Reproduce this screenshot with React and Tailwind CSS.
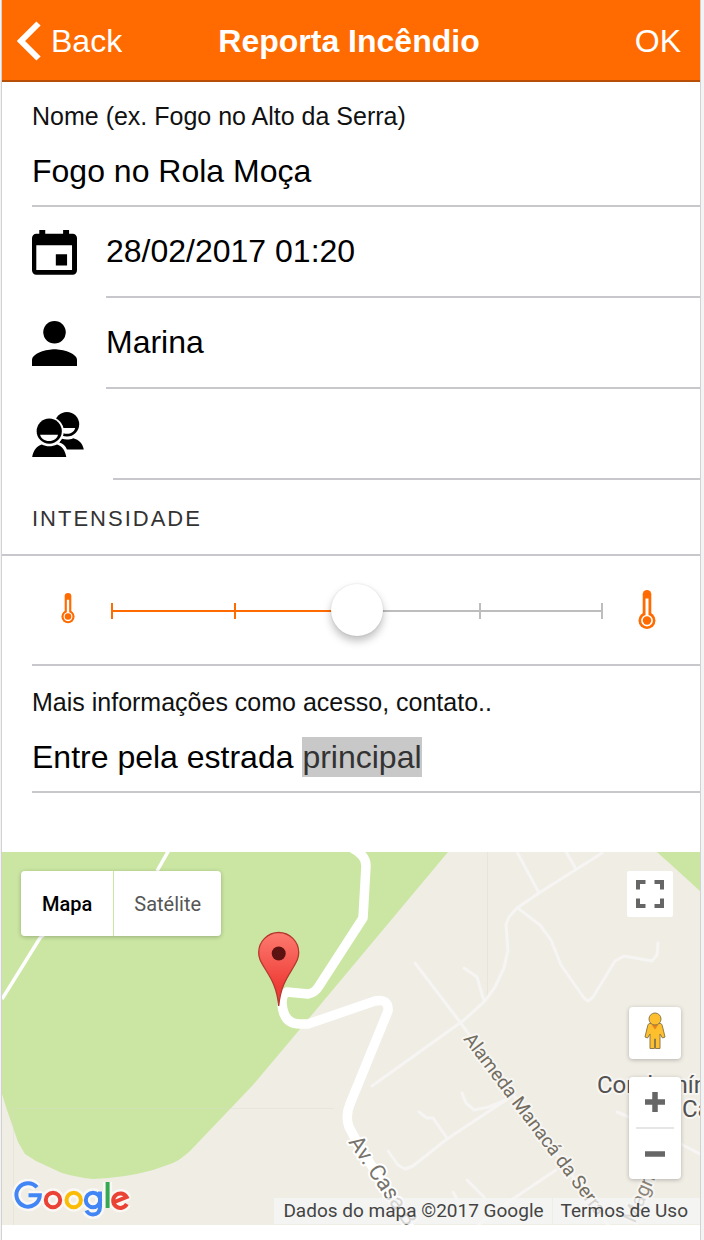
import { useEffect, useRef, useState } from "react";

function BackIcon() {
  return (
    <svg className="h-10 w-6 shrink-0" viewBox="0 0 24 40" fill="none" stroke="currentColor" strokeWidth="6" aria-hidden="true">
      <path d="M21.500 2.500 4 20l17.500 17.500" />
    </svg>
  );
}

function CalendarIcon() {
  return (
    <svg className="h-[45px] w-[45px] shrink-0" viewBox="0 0 136 136" aria-hidden="true">
      <path
        fillRule="evenodd"
        d="M22 0h18v11h54V0h18v11h11a13 13 0 0 1 13 13v98a13 13 0 0 1-13 13H13a13 13 0 0 1-13-13V24a13 13 0 0 1 13-13h9zM13 46v75h108V46zM72 73h34v34H72z"
      />
    </svg>
  );
}

function PersonIcon() {
  return (
    <svg className="h-[45px] w-[45px] shrink-0" viewBox="0 0 136 136" aria-hidden="true">
      <circle cx="68" cy="34" r="34" />
      <path d="M0 136v-18c0-22 45-33 68-33s68 11 68 33v18z" />
    </svg>
  );
}

function PeopleIcon() {
  return (
    <svg className="h-[45px] w-[52px] shrink-0" viewBox="0 0 156 136" aria-hidden="true">
      <circle cx="105" cy="37" r="37" />
      <path d="M86 48h44c-3 11-13 18-25 18-8 0-14-3-19-8z" fill="#fff" />
      <path d="M82 92l8-11c12 4 24 3 34-2 18 4 29 17 32 34h-51c-4-10-12-18-23-21z" />
      <circle cx="51.500" cy="58" r="44" fill="#fff" />
      <circle cx="51.500" cy="58" r="38" />
      <path d="M24 69h54c-2 11-13 19-27 19s-25-8-27-19z" fill="#fff" />
      <path d="M0 136c3-19 13-33 29-38 14 7 31 7 46 0 16 5 25 19 28 38z" />
    </svg>
  );
}

function ThermometerIcon({ large }) {
  return (
    <svg
      className={large ? "h-10 w-[26px] shrink-0" : "ml-6 h-[34px] w-6 shrink-0"}
      viewBox={large ? "-4.500 0 26 40" : "-7 0 31 44"}
      aria-hidden="true"
    >
      <circle cx="8.500" cy="30.500" r="8.500" fill="#ff6b00" />
      <rect x="4.200" y="0" width="8.600" height="28" rx="4.300" fill="#ff6b00" />
      <path d="M7 8.600h3V25a5.800 5.800 0 1 1-3 0z" fill="#fff" />
      <circle cx="8.500" cy="30.500" r="4.200" fill="#ff6b00" />
    </svg>
  );
}

function LogoShapes({ halo }) {
  const c = (color) => (halo ? "#ffffff" : color);
  const w = halo ? 9 : 4;
  return (
    <g fill="none" strokeWidth={w} opacity={halo ? 0.65 : 1} strokeLinejoin={halo ? "round" : "miter"}>
      <path d="M23 7.300A11.700 11.700 0 1 0 25.800 15.300H14.500" stroke={c("#4285f4")} />
      <circle cx="39" cy="20" r="7.200" stroke={c("#ea4335")} />
      <circle cx="59.700" cy="20" r="7.200" stroke={c("#fbbc05")} />
      <circle cx="79" cy="20" r="7.200" stroke={c("#4285f4")} />
      <path d="M86 11.500V27c0 5-3 7.500-7 7.500-3.500 0-5.500-1.700-6.600-4" stroke={c("#4285f4")} />
      <path d="M93.600 2v26" stroke={c("#34a853")} />
      <path d="M112.800 24A7.200 7.200 0 1 1 112.600 17L100.500 22" stroke={c("#ea4335")} />
    </g>
  );
}

function GoogleLogo() {
  return (
    <svg className="h-10 w-[122px]" viewBox="-3 -1 122 40" role="img" aria-label="Google">
      <LogoShapes halo />
      <LogoShapes />
    </svg>
  );
}

const minorRoads = [
  "M516 850 539 893",
  "M565 850 576 869",
  "M602 853 539 893 517 908 509 917 506 925 508 950 504 968 495 987 485 1001 464 1020 372 1086",
  "M519 909 540 925 551 940 561 965 584 998 588 1001 593 997 615 961 624 956 652 961 657 955 658 943",
  "M464 968 477 977 484 1001",
  "M415 963 460 1022 590 1200 612 1230",
  "M419 1112 427 1118 433 1118 447 1138",
  "M388 1151 398 1165 405 1169 413 1166 447 1139 506 1100",
  "M462 1093 466 1103 474 1110 489 1107 506 1100",
  "M556 1170 501 1207 478 1225",
  "M467 1180 484 1197",
  "M453 1192 462 1208",
  "M617 1112 629 1117 700 1154",
];

function MapDrawing() {
  return (
    <svg className="block h-full w-full" viewBox="2 852 698 373" preserveAspectRatio="xMidYMid slice" role="img" aria-label="Mapa da ocorrência">
      <defs>
        <linearGradient id="pin" x1="0" y1="0" x2="0" y2="1">
          <stop offset="0" stopColor="#fd7a6f" />
          <stop offset="0.750" stopColor="#ee3c36" />
        </linearGradient>
      </defs>
      <rect x="2" y="852" width="698" height="373" fill="#f0ede5" />
      <path
        d="M2 852H448L290 1041 252 1086 190 1151Q180 1160 173 1163L153 1170Q124 1178 93 1179 76 1177 62 1173L36 1161 25 1154 18 1142 7 1110 2 1094z"
        fill="#cae6a2"
      />
      <path d="M657 852H700V891L677 870z" fill="#cae6a2" />
      <path d="M12 1108.500H334M487.500 852V1000M13.500 1108V1225" stroke="#dcdcd0" strokeWidth="1" opacity="0.400" />
      <g fill="none" stroke="#f6f5f3" strokeWidth="3" strokeLinecap="round" strokeLinejoin="round">
        {minorRoads.map((d) => (
          <path key={d} d={d} />
        ))}
      </g>
      <g fill="none" stroke="#ffffff" strokeLinejoin="round">
        <path d="M169 850 157 871M47 932 40 938 2 999" strokeWidth="3.500" />
        <path
          d="M352 848Q366 855 366 866L363 918 319 986Q315 993 308 994L287 992Q282 994 282 1003 283 1024 300 1024H308L375 1001Q389 998 388 1011L350 1104Q345 1116 349 1127L358 1144 410 1227"
          strokeWidth="9.500"
        />
      </g>
      <g fontFamily="Roboto, sans-serif" paintOrder="stroke" strokeLinejoin="round">
        <text transform="translate(348 1142) rotate(56)" fontSize="22" fill="#77746d" stroke="#ffffff" strokeWidth="4">
          Av. Casa B
        </text>
        <text transform="translate(463 1039) rotate(53)" fontSize="19" fill="#736d5f" stroke="#f7f6f3" strokeWidth="4">
          Alameda Manacá da Serra
        </text>
        <text transform="translate(635 1224) rotate(-66)" fontSize="20" fill="#8b8578" stroke="#f7f6f3" strokeWidth="4">
          Magn
        </text>
        <g fontSize="24" fill="#545250" stroke="#f7f6f3" strokeWidth="4">
          <text x="597" y="1093">Condomínio</text>
          <text x="682" y="1117">Casa</text>
        </g>
      </g>
      <path
        d="M278.700 1006C277 986 270 977 264 967 260.500 961 258.700 958 258.700 952.500A20 20 0 0 1 298.700 952.500C298.700 958 297 961 293.500 967 287.500 977 280.500 986 278.700 1006z"
        fill="url(#pin)"
        stroke="#b5382f"
        strokeWidth="1.300"
      />
      <circle cx="278.700" cy="953.500" r="7" fill="#5c1210" />
    </svg>
  );
}

function PegmanIcon() {
  return (
    <svg className="h-10 w-6" viewBox="0 0 24 40" stroke="#8f7a4a" strokeWidth="1" strokeLinejoin="round" aria-hidden="true">
      <path d="M7 12.500h10c1.500 0 2 1 2.300 2.300L22 26l-2.500 1-2.500-4v14.500h-4.500V28h-1v9.500H7V23l-2.500 4L2 26l2.700-11.200C5 13.500 5.500 12.500 7 12.500z" fill="#fdbf2d" />
      <path d="M8.500 13.500h7L12 18.500z" fill="#e8821e" stroke="none" />
      <circle cx="12" cy="8" r="6" fill="#fdbf2d" />
    </svg>
  );
}

function FireMap() {
  return (
    <section className="relative mt-[59px] h-[373px] overflow-hidden font-[Roboto,sans-serif]">
      <MapDrawing />
      <div className="absolute top-[19px] left-[19px] flex h-[65px] gap-px rounded-[4px] text-[20px] shadow-[0_1px_4px_rgba(0,0,0,0.25)]">
        <button type="button" className="rounded-l-[4px] bg-white px-[21px] font-medium text-black">
          Mapa
        </button>
        <button type="button" className="rounded-r-[4px] bg-white px-5 text-[#565656]">
          Satélite
        </button>
      </div>
      <button type="button" aria-label="Tela cheia" className="absolute top-[19px] right-[27px] flex h-[46px] w-[46px] items-center justify-center rounded-[2px] bg-white">
        <svg className="h-7 w-7" viewBox="0 0 28 28" fill="none" stroke="#666666" strokeWidth="4" aria-hidden="true">
          <path d="M2 9.500V2h7.500M18.500 2H26v7.500M26 18.500V26h-7.500M9.500 26H2v-7.500" />
        </svg>
      </button>
      <div className="absolute right-[19px] bottom-[46px] flex w-[52px] flex-col gap-[18px]">
        <button type="button" aria-label="Street View" className="flex h-[52px] items-start justify-center rounded-[4px] bg-white pt-1 shadow-[0_1px_4px_rgba(0,0,0,0.25)]">
          <PegmanIcon />
        </button>
        <div className="flex flex-col rounded-[4px] bg-white shadow-[0_1px_4px_rgba(0,0,0,0.25)]">
          <button type="button" aria-label="Aumentar zoom" className="flex h-[50px] items-center justify-center">
            <svg className="h-5 w-5" viewBox="0 0 20 20" stroke="#666666" strokeWidth="5.500" aria-hidden="true">
              <path d="M0 10h20M10 0v20" />
            </svg>
          </button>
          <div className="mx-[7px] h-0.5 bg-[#e6e6e6]" />
          <button type="button" aria-label="Diminuir zoom" className="flex h-[50px] items-center justify-center">
            <svg className="h-5 w-5" viewBox="0 0 20 20" stroke="#666666" strokeWidth="5.500" aria-hidden="true">
              <path d="M0 10h20" />
            </svg>
          </button>
        </div>
      </div>
      <a href="#google" className="absolute bottom-[6px] left-[9px]">
        <GoogleLogo />
      </a>
      <div className="absolute right-0 bottom-px flex gap-px text-[19px] leading-[26px] text-[#444444]">
        <span className="bg-[#f5f5f5]/75 pr-2 pl-[9px]">Dados do mapa ©2017 Google</span>
        <a href="#termos" className="bg-[#f5f5f5]/75 pr-3 pl-2">
          Termos de Uso
        </a>
      </div>
    </section>
  );
}

function IconRow({ icon, label, value }) {
  return (
    <label className="flex h-[91px] items-center gap-[29px] pl-[30px]">
      {icon}
      <input
        aria-label={label}
        defaultValue={value}
        className="h-full min-w-0 flex-1 border-b-2 border-[#c8c7cc] bg-transparent text-[32px] text-black outline-none"
      />
    </label>
  );
}

function IntensitySlider() {
  const [level, setLevel] = useState(2);
  const segments = [0, 1, 2, 3];
  return (
    <div className="ml-[30px] flex h-[110px] items-center border-b-2 border-[#c8c7cc]">
      <ThermometerIcon />
      <div className="mx-1.5 grid flex-1 items-center">
        <div className="col-start-1 row-start-1 flex items-center px-[25px] pt-0.5">
          {segments.map((n) => (
            <div key={n} className={n < level ? "flex flex-1 items-center text-[#ff6b00]" : "flex flex-1 items-center text-[#bdbdbd]"}>
              <span className="h-4 w-0.5 bg-current" />
              <span className="h-0.5 flex-1 bg-current" />
            </div>
          ))}
          <span className="h-4 w-0.5 bg-[#bdbdbd]" />
        </div>
        <input
          id="intensidade"
          type="range"
          min="0"
          max="4"
          value={level}
          onChange={(e) => setLevel(Number(e.target.value))}
          className="col-start-1 row-start-1 h-[52px] w-full appearance-none bg-transparent outline-none [&::-webkit-slider-thumb]:h-[52px] [&::-webkit-slider-thumb]:w-[52px] [&::-webkit-slider-thumb]:appearance-none [&::-webkit-slider-thumb]:rounded-full [&::-webkit-slider-thumb]:bg-white [&::-webkit-slider-thumb]:shadow-[0_5px_8px_rgba(0,0,0,0.25),0_0_2px_rgba(0,0,0,0.12)]"
        />
      </div>
      <div className="mr-10 flex">
        <ThermometerIcon large />
      </div>
    </div>
  );
}

export default function App() {
  const infoRef = useRef(null);

  useEffect(() => {
    const field = infoRef.current;
    field.focus({ preventScroll: true });
    field.setSelectionRange(field.value.lastIndexOf(" ") + 1, field.value.length);
  }, []);

  return (
    <div className="min-h-screen bg-[#f3f3f3] pr-[3px] pl-px font-['Liberation_Sans',Arial,sans-serif]">
      <main className="min-h-screen border-x border-[#d2d2d2] bg-white">
        <header className="grid h-[82px] grid-cols-[1fr_auto_1fr] items-center border-b-2 border-[#b84f06] bg-[#ff6b00] pt-0.5 pr-[19px] pl-[15px] text-[32px] text-white">
          <button type="button" className="flex items-center gap-2.5 justify-self-start">
            <BackIcon />
            Back
          </button>
          <h1 className="font-bold">Reporta Incêndio</h1>
          <button type="button" className="justify-self-end">
            OK
          </button>
        </header>

        <form onSubmit={(e) => e.preventDefault()}>
          <div className="ml-[30px] flex flex-col border-b-2 border-[#c8c7cc] pt-5 pb-3.5">
            <label htmlFor="nome" className="text-[25px] leading-7 text-[#111111]">
              Nome (ex. Fogo no Alto da Serra)
            </label>
            <input id="nome" defaultValue="Fogo no Rola Moça" className="mt-[21px] h-10 w-full bg-transparent text-[32px] text-black outline-none" />
          </div>
          <IconRow icon={<CalendarIcon />} label="Data e hora" value="28/02/2017 01:20" />
          <IconRow icon={<PersonIcon />} label="Responsável" value="Marina" />
          <IconRow icon={<PeopleIcon />} label="Equipe" value="" />

          <label htmlFor="intensidade" className="flex h-[76px] items-center border-b-2 border-[#c8c7cc] pt-[3px] pl-[30px] text-[22px] tracking-[2px] text-[#333333]">
            INTENSIDADE
          </label>
          <IntensitySlider />

          <div className="ml-[30px] flex flex-col border-b-2 border-[#c8c7cc] pt-[22px] pb-3.5">
            <label htmlFor="info" className="text-[25px] leading-7 text-[#111111]">
              Mais informações como acesso, contato..
            </label>
            <input
              id="info"
              ref={infoRef}
              defaultValue="Entre pela estrada principal"
              className="mt-[21px] h-10 w-full bg-transparent text-[32px] text-black outline-none selection:bg-[#c8c8c8] selection:text-[#333333]"
            />
          </div>
        </form>

        <FireMap />
      </main>
    </div>
  );
}
